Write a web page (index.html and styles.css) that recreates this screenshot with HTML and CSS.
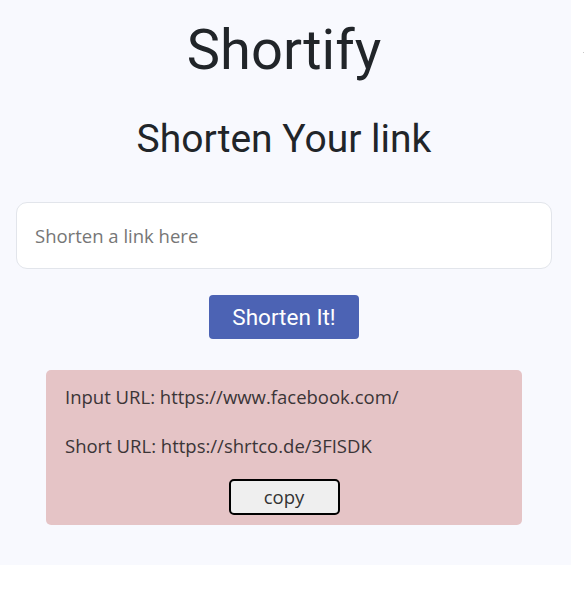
FILE: index.html
```html
<!DOCTYPE html>
<html lang="en">
<head>
<meta charset="utf-8">
<title>Shortify</title>
<link rel="stylesheet" href="styles.css">
</head>
<body>
<div class="app">
  <h1 class="title">Shortify</h1>
  <h2 class="subtitle">Shorten Your link</h2>
  <div class="field-wrap">
    <input class="link-input" type="text" placeholder="Shorten a link here">
  </div>
  <button class="shorten-btn">Shorten It!</button>
  <div class="result">
    <p class="result-line">Input URL: https://www.facebook.com/</p>
    <p class="result-line">Short URL: https://shrtco.de/3FISDK</p>
    <button class="copy-btn">copy</button>
  </div>
</div>
<span class="edge-dot"></span>
</body>
</html>
```
FILE: styles.css
```css
html, body {
  margin: 0;
  padding: 0;
  background: #ffffff;
}
body {
  position: relative;
  width: 584px;
  height: 606px;
  overflow: hidden;
}
.app {
  width: 571px;
  height: 565px;
  box-sizing: border-box;
  background: #f8f9fe;
  display: flex;
  flex-direction: column;
  align-items: center;
  padding: 17px 3px 0 0;
  font-family: Roboto, "Liberation Sans", sans-serif;
  color: #212529;
}
.title {
  margin: 0;
  font-size: 56px;
  font-weight: 400;
  line-height: 1.2;
}
.subtitle {
  margin: 32px 0 0;
  font-size: 39px;
  font-weight: 400;
  line-height: 1.2;
}
.field-wrap {
  align-self: stretch;
  padding: 0 16px;
  margin-top: 39px;
}
.link-input {
  display: block;
  width: 100%;
  height: 67px;
  box-sizing: border-box;
  border: 1px solid #e2e5eb;
  border-radius: 11px;
  background: #ffffff;
  padding: 0 18px;
  font-family: "Open Sans", "Noto Sans", sans-serif;
  font-size: 18.5px;
  color: #333;
  outline: none;
}
.link-input::placeholder {
  color: #767676;
}
.shorten-btn {
  margin-top: 26px;
  width: 150px;
  height: 44px;
  border: none;
  border-radius: 4px;
  background: #4c63b4;
  color: #ffffff;
  font-family: Roboto, "Liberation Sans", sans-serif;
  font-size: 22.5px;
  padding: 0;
}
.result {
  margin-top: 31px;
  width: 476px;
  box-sizing: border-box;
  background: #e5c4c6;
  border-radius: 5px;
  padding: 14px 19px 10px;
  display: flex;
  flex-direction: column;
  align-items: center;
  font-family: "Open Sans", "Noto Sans", sans-serif;
  color: #3b3537;
}
.result-line {
  align-self: stretch;
  margin: 0 0 23px;
  font-size: 18.5px;
  line-height: 26px;
}
.copy-btn {
  margin-top: -3px;
  width: 111px;
  height: 36px;
  box-sizing: border-box;
  border: 2px solid #000000;
  border-radius: 5px;
  background: #efefef;
  font-family: "Open Sans", "Noto Sans", sans-serif;
  font-size: 18.5px;
  color: #333;
  padding: 0;
}
.edge-dot {
  position: absolute;
  left: 583px;
  top: 52px;
  width: 1px;
  height: 1px;
  background: #c8c8c8;
}
```
